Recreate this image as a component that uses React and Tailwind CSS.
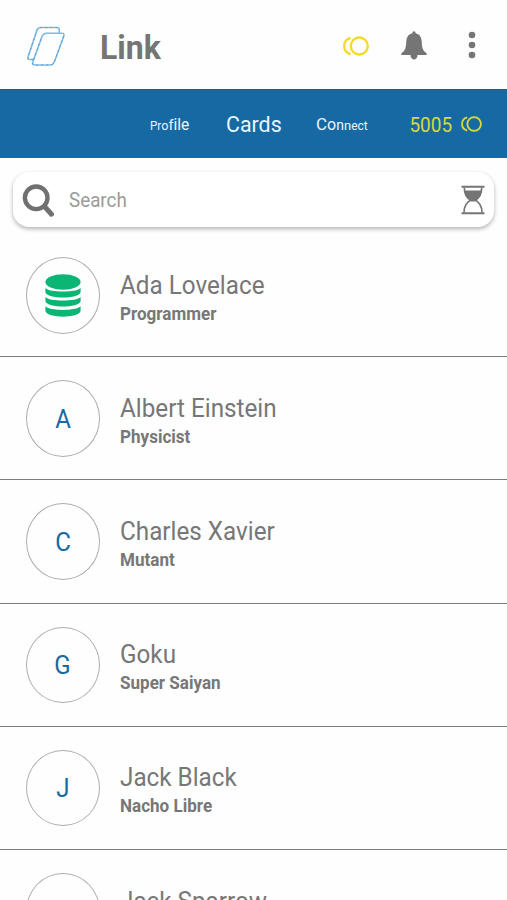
import React from 'react';

const contacts = [
    { name: 'Ada Lovelace', title: 'Programmer', icon: true },
    { name: 'Albert Einstein', title: 'Physicist' },
    { name: 'Charles Xavier', title: 'Mutant' },
    { name: 'Goku', title: 'Super Saiyan' },
    { name: 'Jack Black', title: 'Nacho Libre' },
    { name: 'Jack Sparrow' },
];

const Logo = () => (
    <svg className="w-[40px] h-[42px] shrink-0" viewBox="0 0 40 42" fill="none" stroke="#7fbae4" strokeWidth="1.6">
        <path d="M7.5 35.5H4Q1.2 35.5 2.1 32.7L11 6Q12.2 3.5 15 3.5H31Q33.2 3.5 33.2 6V9" />
        <path d="M20.5 9.2H36Q38.6 9.2 37.8 12L28.5 37.5Q27 41 24 41H9Q5.8 41 6.8 38L16 12.5Q17.3 9.2 20.5 9.2Z" />
        <path d="M7.5 35.5H4Q1.2 35.5 2.1 32.7L11 6Q12.2 3.5 15 3.5H31" stroke="#4795cc" strokeWidth="0.8" strokeDasharray="2 3" />
        <path d="M37.8 12L28.5 37.5Q27 41 24 41H9Q5.8 41 6.8 38L16 12.5" stroke="#4795cc" strokeWidth="0.8" strokeDasharray="2 3" />
    </svg>
);

const Coins = ({ className }) => (
    <svg className={className} viewBox="0 0 26 20" fill="none" stroke="currentColor" strokeWidth="2.3">
        <circle cx="16.3" cy="10" r="8.5" />
        <path d="M7.6 1.8C3.4 3 1.2 6.3 1.2 10s2.2 7 6.4 8.2" />
    </svg>
);

const Bell = () => (
    <svg className="w-[26px] h-[29px]" viewBox="0 0 26 29" fill="#757575">
        <path d="M13 0.3c-1 0-1.6.8-1.6 2C7.6 3.2 5.5 6.3 5.3 10.3 5 16 4.6 19.2 1 21.8Q0.2 22.4 0.2 24H25.8Q25.8 22.4 25 21.8C21.4 19.2 21 16 20.7 10.3 20.5 6.3 18.4 3.2 14.6 2.3c0-1.2-.6-2-1.6-2Z" />
        <path d="M9.5 24h7c0 3-1.6 4.4-3.5 4.4S9.5 27 9.5 24Z" />
    </svg>
);

const MoreDots = () => (
    <svg className="w-[8px] h-[28px]" viewBox="0 0 8 28" fill="#757575">
        <circle cx="4" cy="4" r="3.3" />
        <circle cx="4" cy="14" r="3.3" />
        <circle cx="4" cy="24" r="3.3" />
    </svg>
);

const SearchIcon = () => (
    <svg className="w-[32px] h-[34px]" viewBox="0 0 32 34" fill="none" stroke="#707070">
        <circle cx="14.2" cy="14.8" r="11.3" strokeWidth="4.4" />
        <path d="M22.5 23.5L29.5 31.2" strokeWidth="5" strokeLinecap="round" />
    </svg>
);

const Hourglass = () => (
    <svg className="w-[24px] h-[30px]" viewBox="0 0 24 30" fill="none" stroke="#757575" strokeWidth="1.7">
        <path d="M0.5 1.8H23.5M0.5 28.2H23.5" strokeWidth="2" />
        <path d="M3.3 2.5C3.3 9 5 12.5 9.8 15 5 17.5 3 21.5 3 27.5M20.7 2.5C20.7 9 19 12.5 14.2 15 19 17.5 21 21.5 21 27.5" />
        <path d="M3.5 5.5H20.5C20.3 10.5 18.5 13 14 16.5H10C5.5 13 3.7 10.5 3.5 5.5Z" fill="#757575" stroke="none" />
    </svg>
);

const Database = () => (
    <svg className="w-[36px] h-[43px]" viewBox="0 0 36 43" fill="#0bb573">
        <ellipse cx="18" cy="8" rx="17.6" ry="7.7" />
        <path d="M0.4 14C4 18.8 32 18.8 35.6 14V18.3C34 25.3 2 25.3 0.4 18.3Z" />
        <path d="M0.4 23C4 27.8 32 27.8 35.6 23V27.3C34 34.3 2 34.3 0.4 27.3Z" />
        <path d="M0.4 32.3C4 37.1 32 37.1 35.6 32.3V37C34 44.5 2 44.5 0.4 37Z" />
    </svg>
);

const ContactRow = ({ contact }) => (
    <li className="flex items-start h-[123.2px] shrink-0 pt-[23px] pl-[26px] border-b border-[#7c7c7c]">
        <div className="w-[74px] h-[76.5px] shrink-0 rounded-[50%] border border-[#adadad] flex items-center justify-center text-[25px] text-[#1769a3]">
            {contact.icon ? <Database /> : <span className="pt-[2px] scale-x-[0.96]">{contact.name[0]}</span>}
        </div>
        <div className="ml-5 pt-[12.6px] whitespace-nowrap text-[#777777]">
            <h2 className="text-[25px] leading-[31px] origin-left scale-x-[0.97]">{contact.name}</h2>
            {contact.title && (
                <p className="text-[17.5px] leading-[26px] font-bold origin-left scale-x-[0.975]">{contact.title}</p>
            )}
        </div>
    </li>
);

const App = () => {
    return (
        <div className="w-full h-[900px] overflow-hidden bg-[#fefefe] flex flex-col font-[Roboto,sans-serif]">
            {/* Top bar */}
            <header className="h-[89px] shrink-0 flex items-center pl-[26px] pr-[31px]">
                <Logo />
                <h1 className="ml-[34px] pt-[5px] text-[34px] leading-10 font-bold text-[#757575] origin-left scale-x-[0.94]">Link</h1>
                <div className="ml-auto flex items-center">
                    <Coins className="w-[26px] h-[20px] mt-[2px] text-[#f7d91e]" />
                    <span className="ml-8 mt-px"><Bell /></span>
                    <span className="ml-[41px] mt-px"><MoreDots /></span>
                </div>
            </header>

            {/* Tabs */}
            <nav className="h-[69px] shrink-0 flex items-center bg-[#1769a3] border-t border-[#315a72] pl-[150px] pr-[25px] text-[#e8f6ff]">
                <span className="w-[76px] pt-[2px] leading-6 whitespace-nowrap origin-left scale-x-[0.97]">
                    <span className="text-[12px]">Pr</span>
                    <span className="text-[13px]">o</span>
                    <span className="text-[15px]">f</span>
                    <span className="text-[16px]">ile</span>
                </span>
                <span className="w-[90px] pt-[2px] text-[22.5px] origin-left scale-x-[0.95]">Cards</span>
                <span className="pt-[2px] leading-6 whitespace-nowrap">
                    <span className="text-[17px]">C</span>
                    <span className="text-[16px]">o</span>
                    <span className="text-[14px]">n</span>
                    <span className="text-[13px]">n</span>
                    <span className="text-[12px]">ect</span>
                </span>
                <span className="ml-auto flex items-center text-[#d8d936]">
                    <span className="text-[20.5px] pt-[2px] origin-right scale-x-[0.925]">5005</span>
                    <Coins className="ml-[9px] w-[21px] h-[16px]" />
                </span>
            </nav>

            {/* Search */}
            <div className="mt-[14px] mx-[13px] h-[55px] shrink-0 flex items-center rounded-[16px] bg-white pl-[9px] pr-[9px] shadow-[0_2px_4px_rgba(0,0,0,0.3)]">
                <SearchIcon />
                <span className="ml-[15px] pt-px text-[20px] text-[#9b9b9b] origin-left scale-x-[0.94]">Search</span>
                <span className="ml-auto"><Hourglass /></span>
            </div>

            {/* Contacts */}
            <ul className="mt-[7px] flex flex-col">
                {contacts.map((contact) => (
                    <ContactRow key={contact.name} contact={contact} />
                ))}
            </ul>
        </div>
    );
};

export default App;
